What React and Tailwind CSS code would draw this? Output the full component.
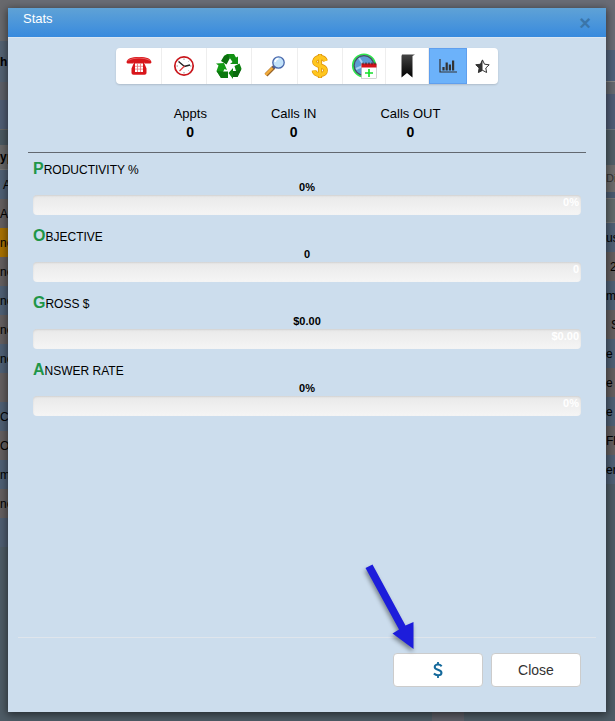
import React from "react";

const PhoneIcon = () => (
  <svg width="26" height="20" viewBox="0 0 26 20">
    <path d="M.5 6.500C1 2.500 5 1 13 1s12 1.500 12.500 5.500l-1 1h-5.500l-1-1V4.800H8v1.700l-1 1H1.500z" fill="#d8161b" />
    <path d="M8 4h10v2.500l2.500 6V17q0 1.800-2 1.800h-11q-2 0-2-1.800v-4.500L8 6.500z" fill="#d8161b" />
    <path d="M1.500 4.500Q7 2 13 2T24.500 4.500" stroke="#ee6a6a" strokeWidth="0.800" fill="none" />
    <rect x="9" y="7.500" width="8" height="8.500" fill="#fff" />
    <path d="M11.500 7.500v8.500M14.500 7.500v8.500M9 10.300h8M9 13.100h8" stroke="#e87477" strokeWidth="0.800" />
  </svg>
);

const ClockIcon = () => (
  <svg width="22" height="22" viewBox="0 0 22 22">
    <circle cx="11" cy="11" r="9.200" fill="#fff" stroke="#c9151b" strokeWidth="1.700" />
    <path d="M11 3.500v1.500M11 17v1.500M3.500 11H5M17 11h1.500M5.700 5.700l.8.800M16.300 5.700l-.8.800M16.300 16.300l-.8-.8" stroke="#888" strokeWidth="0.900" />
    <path d="M11.500 11.500L5.500 6.500M11 11.500l6-1.500" stroke="#222" strokeWidth="1.400" />
    <path d="M11.500 11l-5 5" stroke="#e23a3a" strokeWidth="1.200" />
  </svg>
);

const RecycleIcon = () => (
  <svg width="26" height="26" viewBox="0 0 26 26">
    <path d="M8 3l3-2h7l2 3.500 2-1v7.500h-8l2.500-2L12.500 3z" fill="#129114" />
    <path d="M8 3l4-1.500 2 3.500-3.500 6.500L5 8z" fill="#0b6f0e" />
    <path d="M18.500 13l5-2.500 2 5-4 8.500h-4.500v2L12.500 20l4.500-5v3h3z" fill="#0e830f" />
    <path d="M21.500 24l4-8-5 2h-3.500v6z" fill="#0a690d" />
    <path d="M0 10.500l8-.5 3 7-2.500-1-1.500 3H12V25H5l-4.500-7 2-5.500z" fill="#159b16" />
    <path d="M.5 18L6 18.500h6V25H5z" fill="#0b780e" />
  </svg>
);

const SearchIcon = () => (
  <svg width="22" height="22" viewBox="0 0 22 22">
    <path d="M10 12l-8 8" stroke="#97642a" strokeWidth="4" />
    <path d="M8.500 12.800l-7 7" stroke="#f3ac3c" strokeWidth="2.400" />
    <path d="M11 11l-2 2" stroke="#5a5f80" strokeWidth="3" />
    <circle cx="14.500" cy="7.500" r="5.700" fill="#c3e3fa" stroke="#4867ab" strokeWidth="1.300" />
    <path d="M11 7q.5-3 3.500-3.500" stroke="#fff" strokeWidth="1.600" fill="none" />
  </svg>
);

const GoldDollarIcon = () => (
  <svg width="18" height="26" viewBox="0 0 18 26">
    <path d="M9 1v24" stroke="#dc9208" strokeWidth="4.200" />
    <path d="M14.500 8Q13.500 4.500 9 4.500T3.500 8.500Q3.500 11.500 9 12.800t5.500 4.500Q14.500 21.500 9 21.500T3 17.500" stroke="#dc9208" strokeWidth="4.800" fill="none" />
    <path d="M9 1.500v23" stroke="#ffcd2e" strokeWidth="2.600" />
    <path d="M14.500 8Q13.500 4.500 9 4.500T3.500 8.500Q3.500 11.500 9 12.800t5.500 4.500Q14.500 21.500 9 21.500T3 17.500" stroke="#ffc61e" strokeWidth="3.400" fill="none" />
  </svg>
);

const ScheduleIcon = () => (
  <svg width="26" height="26" viewBox="0 0 26 26">
    <circle cx="13" cy="12.500" r="11.300" fill="#5c9bd4" stroke="#2fe64a" strokeWidth="1.600" />
    <circle cx="13" cy="12.500" r="9.900" fill="none" stroke="#46535f" strokeWidth="1.300" />
    <path d="M13 12.500L8 5M13 12.500L5 16" stroke="#a9d2f3" strokeWidth="2" />
    <rect x="10.500" y="11" width="15" height="14.500" fill="#fff" stroke="#aaa" strokeWidth="0.500" />
    <path d="M10.500 10.500h15v4h-15z" fill="#d3121a" />
    <path d="M12 9.500v2M15 9.500v2M18 9.500v2M21 9.500v2M24 9.500v2" stroke="#222" strokeWidth="1" />
    <path d="M18 16v8M14 20h8" stroke="#16e02c" strokeWidth="1.700" />
  </svg>
);

const BookmarkIcon = () => (
  <svg width="16" height="24" viewBox="0 0 16 24">
    <defs>
      <linearGradient id="ribbon" x1="0" y1="0" x2="0" y2="1">
        <stop offset="0" stopColor="#444" />
        <stop offset="1" stopColor="#000" />
      </linearGradient>
    </defs>
    <path d="M3 .5h13l-2.500 1.500V23.500L8 19 2.500 23.500V2z" fill="url(#ribbon)" />
  </svg>
);

const ChartIcon = () => (
  <svg width="18" height="14" viewBox="0 0 18 14">
    <path d="M1 0v13h17" stroke="#333" strokeWidth="1.200" fill="none" />
    <path d="M4.500 11.500V8M7.700 11.500V3.500M10.900 11.500V5.500M14.100 11.500V1.500" stroke="#333" strokeWidth="2.200" />
  </svg>
);

const HalfStarIcon = () => (
  <svg width="15" height="14" viewBox="0 0 15 14">
    <path d="M7.500 1l2 4.200 4.700.6-3.400 3.200.8 4.500-4.100-2.200-4.100 2.200.8-4.500L.8 5.800l4.700-.6z" fill="none" stroke="#333" strokeWidth="1" />
    <path d="M7.500 0v11.500L3.200 13.800 4 9.200.5 5.600l5-.6z" fill="#333" />
  </svg>
);

const DollarIcon = () => (
  <svg width="12" height="18" viewBox="0 0 12 18">
    <path d="M6 1v3M6 14v3" stroke="#14699b" strokeWidth="1.800" />
    <path d="M9.700 5.200Q8.200 3.600 6 3.600 2.700 3.600 2.700 6 2.700 7.800 6 8.800T9.500 11.800Q9.500 14.300 6 14.300 3.500 14.300 1.900 12.500" stroke="#14699b" strokeWidth="2" fill="none" />
  </svg>
);

const tools = [
  { name: "Phone", icon: <PhoneIcon />, style: "w-[46px]" },
  { name: "Clock", icon: <ClockIcon />, style: "w-[45px]" },
  { name: "Recycle", icon: <RecycleIcon />, style: "w-[45px]" },
  { name: "Search", icon: <SearchIcon />, style: "w-[46px]" },
  { name: "Sales", icon: <GoldDollarIcon />, style: "w-[45px]" },
  { name: "Schedule", icon: <ScheduleIcon />, style: "w-[43px]" },
  { name: "Bookmark", icon: <BookmarkIcon />, style: "w-[43px]" },
  { name: "Stats", icon: <ChartIcon />, style: "w-[38px]", active: true },
  { name: "Favorite", icon: <HalfStarIcon />, style: "w-[31px]" },
];

const totals = [
  { label: "Appts", value: "0" },
  { label: "Calls IN", value: "0" },
  { label: "Calls OUT", value: "0" },
];

const bars = [
  { label: "PRODUCTIVITY %", value: "0%" },
  { label: "OBJECTIVE", value: "0" },
  { label: "GROSS $", value: "$0.00" },
  { label: "ANSWER RATE", value: "0%" },
];

const leftRows = [
  { style: "h-[41px] bg-[#68696d]" },
  { text: "h", style: "h-[41px] bg-[#536273] font-bold" },
  { style: "h-[18px] bg-[#5d6068]" },
  { style: "h-[29px] bg-[#4f5d74]" },
  { style: "h-[16px] bg-[#4a5961] border-t border-[#666]" },
  { text: "yp", style: "h-[25px] bg-[#686868] font-bold border-b border-[#777]" },
  { text: "A", style: "h-[29px] bg-[#4f6075] pl-[3px]" },
  { text: "Ap", style: "h-[29px] bg-[#645f60]" },
  { text: "ne", style: "h-[29px] bg-[#a87100]" },
  { text: "ne", style: "h-[29px] bg-[#645f60]" },
  { text: "ne", style: "h-[29px] bg-[#4f6075]" },
  { text: "ne", style: "h-[29px] bg-[#645f60]" },
  { text: "ne", style: "h-[29px] bg-[#4f6075]" },
  { style: "h-[29px] bg-[#645f60]" },
  { text: "CS", style: "h-[29px] bg-[#4f6075]" },
  { text: "Or", style: "h-[29px] bg-[#645f60]" },
  { text: "m", style: "h-[29px] bg-[#4f6075]" },
  { text: "ne", style: "h-[29px] bg-[#645f60]" },
  { style: "h-[29px] bg-[#4f5e72]" },
];

const rightRows = [
  { style: "h-[50px] bg-[#6a6c75]" },
  { style: "h-[31px] bg-[#50617b]" },
  { style: "h-[13px] bg-[#65686f] border-t border-[#888]" },
  { style: "h-[35px] bg-[#505d76]" },
  { style: "h-[36px] bg-[#515f68] border-t border-[#6c757c]" },
  { text: "Dis", style: "h-[27px] bg-[#6d6c6c] text-[11px] text-[#333]" },
  { style: "h-[6px] bg-[#4b5b70]" },
  { style: "h-[25px] bg-[#626a6c] border-y border-[#777]" },
  { text: "us", style: "h-[29px] bg-[#4f6075]" },
  { text: "2", style: "h-[29px] bg-[#645f60] pl-[4px]" },
  { text: "m", style: "h-[29px] bg-[#4f6075]" },
  { text: "S", style: "h-[29px] bg-[#645f60] pl-[5px]" },
  { text: "e", style: "h-[29px] bg-[#4f6075]" },
  { text: "e", style: "h-[29px] bg-[#645f60]" },
  { text: "e", style: "h-[29px] bg-[#4f6075]" },
  { text: "Fl", style: "h-[29px] bg-[#645f60]" },
  { text: "en", style: "h-[29px] bg-[#4f6075]" },
];

const PageColumn = ({ rows, width }) => (
  <div className={`${width} flex flex-col`}>
    {rows.map((row, idx) => (
      <div key={idx} className={`flex shrink-0 items-center whitespace-nowrap ${row.style}`}>
        {row.text}
      </div>
    ))}
  </div>
);

const StatBar = ({ label, value }) => (
  <div className="mb-[10px]">
    <h3 className="h-[21px] text-xs leading-[22px]">
      <span className="text-base leading-[22px] font-bold text-[#1f9648]">{label[0]}</span>
      {label.slice(1)}
    </h3>
    <div className="h-4 text-center text-[11px] leading-4 font-bold">{value}</div>
    <div className="h-5 rounded bg-linear-to-b from-[#e9e9e9] to-[#f5f5f5] px-[2px] text-right text-[11px] leading-[14px] font-bold text-white inset-shadow-[0_1px_2px_rgba(0,0,0,0.1)]">
      {value}
    </div>
  </div>
);

const App = () => {
  return (
    <div className="relative min-h-screen bg-[#4e5c66] font-['Liberation_Sans',Arial,sans-serif] text-black">
      {/* Dimmed page behind the dialog */}
      <div className="absolute inset-0 flex justify-between overflow-hidden text-xs" aria-hidden="true">
        <PageColumn rows={leftRows} width="w-5" />
        <div className="flex flex-1 flex-col justify-between">
          <div className="h-5 bg-[#696c75]" />
          <div className="mr-[142px] h-4 w-8 self-end bg-[#5e5f68]" />
        </div>
        <PageColumn rows={rightRows} width="w-[9px]" />
      </div>

      <div className="relative flex min-h-screen pt-2 pr-[9px] pb-[9px] pl-2">
        <div role="dialog" aria-label="Stats" className="flex flex-1 flex-col bg-[#ccdded] shadow-[0_2px_8px_1px_rgba(0,0,0,0.5)]">
          <div className="flex h-[30px] justify-between border-b border-[#d9e6f2] bg-linear-to-b from-[#5fa2d6] to-[#378ade] pr-[15px] pl-[15px]">
            <h2 className="text-[13px] leading-[22px] text-white">Stats</h2>
            <button className="text-xl leading-7 font-bold text-[#3a75a9]" aria-label="Close dialog">×</button>
          </div>

          <div className="px-5 pt-[10px]">
            <div className="flex justify-center">
              <div className="flex h-9 rounded bg-white shadow-[0_1px_2px_rgba(0,0,0,0.15)]">
                {tools.map((tool) => (
                  <button
                    key={tool.name}
                    aria-label={tool.name}
                    className={`flex items-center justify-center ${tool.style} ${
                      tool.active ? "border border-[#5f9fee] bg-[#6cb2fa]" : "border-r border-[#eeeeee] last:border-r-0"
                    }`}
                  >
                    {tool.icon}
                  </button>
                ))}
              </div>
            </div>

            <div className="flex justify-center gap-16 border-b border-[#626870] pt-5 pb-[10px] text-center">
              {totals.map((total) => (
                <div key={total.label}>
                  <div className="text-[13px] leading-[19px]">{total.label}</div>
                  <div className="text-sm leading-[19px] font-bold">{total.value}</div>
                </div>
              ))}
            </div>

            <div className="px-[5px] pt-[5px]">
              {bars.map((bar) => (
                <StatBar key={bar.label} label={bar.label} value={bar.value} />
              ))}
            </div>
          </div>

          <div className="relative mx-[10px] mt-auto flex justify-end gap-2 border-t border-[#dfe5ec] px-[15px] pt-[15px] pb-[25px]">
            <button className="flex h-[34px] w-[90px] items-center justify-center rounded border border-[#ccc] bg-white" aria-label="Sales">
              <DollarIcon />
            </button>
            <button className="h-[34px] w-[90px] rounded border border-[#ccc] bg-white text-sm text-[#333]">Close</button>

            {/* Arrow pointing at the dollar button */}
            <svg className="absolute right-[170px] bottom-[58px] drop-shadow-[-1px_3px_2px_rgba(0,0,0,0.4)]" width="64" height="92" viewBox="0 0 64 92">
              <path d="M3.500 6l7-3.500L43.500 63.500l8-3.500v27L30.500 71.500l6.500-4z" fill="#1d1ddb" />
            </svg>
          </div>
        </div>
      </div>
    </div>
  );
};

export default App;
